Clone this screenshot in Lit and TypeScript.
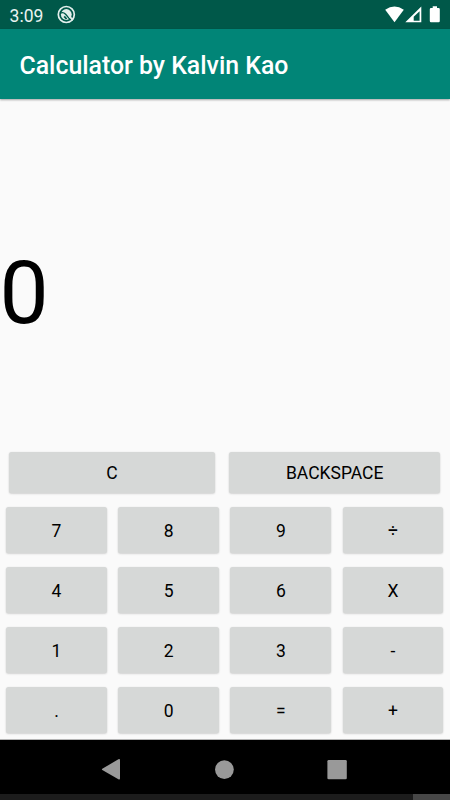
import { LitElement, html, css } from "lit";
import { customElement, property } from "lit/decorators.js";

@customElement("calc-key")
class CalcKey extends LitElement {
  @property() label = "";

  static styles = css`
    :host { display: block; min-width: 0; }
    .key {
      display: flex; align-items: center; justify-content: center;
      box-sizing: border-box; width: 100%; height: 100%;
      margin: 0; padding: 1px 0 0; border: 0; border-radius: 2.5px;
      background: #d6d8d7; color: #000;
      font: 400 17.5px/20px Roboto, sans-serif;
      box-shadow: 0 1px 2px rgba(0, 0, 0, 0.15), 0 0 2px rgba(0, 0, 0, 0.06);
    }
  `;

  render() {
    return html`<button class="key">${this.label}</button>`;
  }
}

@customElement("status-bar")
class StatusBar extends LitElement {
  static styles = css`
    :host {
      display: flex; align-items: center; box-sizing: border-box;
      height: 29px; padding: 0 9px 0 9.6px; background: #005849; color: #eaf3f1;
      font: 400 17.5px/20px Roboto, sans-serif;
    }
    .time { width: 47.4px; padding-top: 2px; }
    .grow { flex: 1; }
    svg { display: block; }
  `;

  render() {
    return html`
      <span class="time">3:09</span>
      <svg width="20" height="29" viewBox="0 0 20 29" fill="none" stroke="#e3efec">
        <circle cx="9.3" cy="14.5" r="8" stroke-width="1.7" />
        <circle cx="9.3" cy="14.5" r="5.4" fill="#e3efec" stroke="none" />
        <path d="M3.2 13.2Q6.2 11.6 8.6 14.3L13.6 20.2" stroke="#005849" stroke-width="1.3" />
        <path d="M7.2 16.3L9.6 19" stroke="#005849" stroke-width="1.8" />
        <path d="M12.2 16.2L16 20.2" stroke-width="1.8" />
      </svg>
      <span class="grow"></span>
      <svg width="56" height="29" viewBox="385 0 56 29" fill="#fff">
        <path d="M385.2 9.8Q394.5 3 403.8 9.8L394.5 22.3Z" />
        <path fill-rule="evenodd" d="M421.3 6.4V22.3H405.3ZM419.6 11.2V20.7H413.7V16.8Z" />
        <path d="M431 8H432.7V6.3H437V8H438.6Q439.8 8 439.8 9.2V21.1Q439.8 22.3 438.6 22.3H431Q429.8 22.3 429.8 21.1V9.2Q429.8 8 431 8Z" />
      </svg>
    `;
  }
}

@customElement("nav-bar")
class NavBar extends LitElement {
  static styles = css`
    :host { display: block; height: 60px; background: #000; }
    .icons { display: block; height: 54px; width: 450px; }
    .strip { display: flex; justify-content: flex-end; height: 6px; background: #1c1c1c; }
    .thumb { width: 37px; background: #474747; }
  `;

  render() {
    return html`
      <svg class="icons" viewBox="0 0 450 54" fill="#999">
        <path d="M102.3 28.7L118.4 19.3Q120 18.6 120 20.2V38.4Q120 40 118.4 39.2L102.3 30.1Q101.5 29.4 102.3 28.7Z" />
        <circle cx="224.4" cy="29.6" r="9.4" />
        <rect x="327.4" y="20" width="19.4" height="19.2" rx="1.3" />
      </svg>
      <div class="strip"><div class="thumb"></div></div>
    `;
  }
}

@customElement("app-root")
class AppRoot extends LitElement {
  private keys = ["7", "8", "9", "÷", "4", "5", "6", "X", "1", "2", "3", "-", ".", "0", "=", "+"];

  static styles = css`
    :host {
      display: flex; flex-direction: column; width: 450px; height: 800px;
      overflow: hidden; background: #fafafa; font-family: Roboto, sans-serif;
    }
    .title {
      box-sizing: border-box; height: 70px; padding: 3px 0 0 19.5px; flex: none;
      background: #018577; color: #fff; font-size: 24.85px; font-weight: 500; line-height: 68px;
      white-space: nowrap; box-shadow: 0 1px 2px rgba(0, 0, 0, 0.35);
    }
    .display { flex: 1; min-height: 0; color: #000; font-size: 87.5px; line-height: 103px; padding: 143px 0 0 0; text-indent: -0.5px; }
    .top { display: grid; grid-template-columns: 205.7px 211px; column-gap: 14.5px; height: 41px; padding: 0 0 14px 9px; }
    .pad {
      display: grid; grid-template-columns: repeat(4, 100.7px); grid-auto-rows: 46.3px;
      column-gap: 11.5px; row-gap: 13.7px; padding: 0 0 5.7px 6.1px;
    }
    .edge { height: 1px; background: #b5b5b5; }
  `;

  render() {
    return html`
      <status-bar></status-bar>
      <div class="title">Calculator by Kalvin Kao</div>
      <div class="display">0</div>
      <div class="top">
        <calc-key label="C"></calc-key>
        <calc-key label="BACKSPACE"></calc-key>
      </div>
      <div class="pad">${this.keys.map((k) => html`<calc-key label=${k}></calc-key>`)}</div>
      <div class="edge"></div>
      <nav-bar></nav-bar>
    `;
  }
}
